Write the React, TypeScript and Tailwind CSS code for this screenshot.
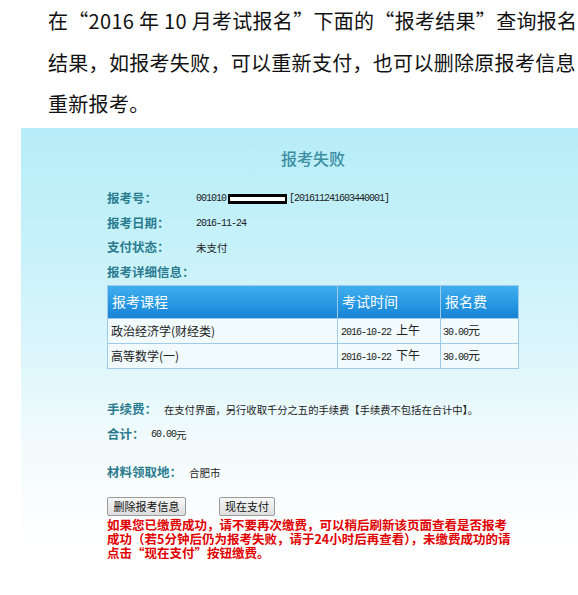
const cjk = { fontFamily: '"Noto Sans CJK SC", "Noto Sans", sans-serif' };
const mono = { fontFamily: '"Liberation Mono", "Noto Sans CJK SC", monospace' };

function InfoRow({ label, children, className = '' }: { label: string; children?: React.ReactNode; className?: string }) {
  return (
    <div className={`flex h-[24.5px] items-center ${className}`}>
      <span className="w-[89px] shrink-0 text-[12.5px] font-bold text-[#2b7c8f]">{label}</span>
      {children}
    </div>
  );
}

const rows = [
  { course: '政治经济学(财经类)', time: '2016-10-22', half: '上午', fee: '30.00' },
  { course: '高等数学(一)', time: '2016-10-22', half: '下午', fee: '30.00' },
];

export default function App() {
  return (
    <div className="relative h-[595px] w-[578px] overflow-hidden bg-white" style={cjk} lang="zh-CN">
      <div className="h-[128px] pl-[48px] text-[20px] leading-[41.5px] tracking-[0.3px] text-[#111]">
        <div className="whitespace-nowrap">在“2016 年 10 月考试报名”下面的“报考结果”查询报名</div>
        <div className="whitespace-nowrap">结果，如报考失败，可以重新支付，也可以删除原报考信息</div>
        <div className="whitespace-nowrap">重新报考。</div>
      </div>

      <section className="ml-[21px] h-[455px] bg-[linear-gradient(to_bottom,#b6edf8_0%,#c6f1fa_25%,#dcf6fb_50%,#f3fbfd_70%,#ffffff_92%)] pl-[86px] pt-[20px]">
        <h2 className="w-[412px] text-center text-[16px] leading-[20px] font-medium text-[#3d8ea3]">报考失败</h2>

        <div className="mt-[18.5px]">
          <InfoRow label="报考号：">
            <span className="flex items-center text-[10px] tracking-[-1px] text-[#222]" style={mono}>
              001010
              <span className="mx-[2px] inline-block h-[10px] w-[59px] border-y-[3px] border-x-[2px] border-black bg-white" />
              [201611241603440001]
            </span>
          </InfoRow>
          <InfoRow label="报考日期：">
            <span className="text-[10px] tracking-[-1px] text-[#222]" style={mono}>2016-11-24</span>
          </InfoRow>
          <InfoRow label="支付状态：">
            <span className="text-[10.5px] text-[#222]">未支付</span>
          </InfoRow>
          <InfoRow label="报考详细信息：" />
        </div>

        <table className="w-[412px] border-collapse text-left">
          <thead>
            <tr className="h-[33px] bg-[linear-gradient(to_bottom,#42b0ef,#2596e2_60%,#1883d3)] text-[14px] text-white">
              <th className="w-[230px] border border-[#9fcbea] pl-[4px] font-normal">报考课程</th>
              <th className="w-[103px] border border-[#9fcbea] pl-[4px] font-normal">考试时间</th>
              <th className="border border-[#9fcbea] pl-[4px] font-normal">报名费</th>
            </tr>
          </thead>
          <tbody>
            {rows.map((r) => (
              <tr key={r.course} className="h-[25px] bg-[#f1fafd] text-[12px] text-[#222]">
                <td className="border border-[#9fcbea] pl-[3px]">{r.course}</td>
                <td className="border border-[#9fcbea] pl-[3px]">
                  <span className="text-[10px] tracking-[-1px]" style={mono}>{r.time}</span>
                  <span className="ml-[5px]">{r.half}</span>
                </td>
                <td className="border border-[#9fcbea] pl-[2px]">
                  <span className="text-[10px] tracking-[-1px]" style={mono}>{r.fee}</span>元
                </td>
              </tr>
            ))}
          </tbody>
        </table>

        <div className="mt-[29px] flex h-[24px] items-center">
          <span className="w-[57px] shrink-0 text-[12.5px] font-bold text-[#2b7c8f]">手续费：</span>
          <span className="text-[10.3px] whitespace-nowrap text-[#222]">在支付界面，另行收取千分之五的手续费【手续费不包括在合计中】。</span>
        </div>
        <div className="mt-[1px] flex h-[24px] items-center">
          <span className="w-[44px] shrink-0 text-[12.5px] font-bold text-[#2b7c8f]">合计：</span>
          <span className="text-[10px] tracking-[-1px] text-[#222]" style={mono}>60.00</span>
          <span className="text-[10.5px] text-[#222]">元</span>
        </div>
        <div className="mt-[14px] flex h-[24px] items-center">
          <span className="w-[82px] shrink-0 text-[12.5px] font-bold text-[#2b7c8f]">材料领取地：</span>
          <span className="text-[10.5px] text-[#222]">合肥市</span>
        </div>

        <div className="mt-[12px] flex gap-[33px]">
          <button className="h-[19px] w-[79px] rounded-[2px] border border-[#9a9a9a] bg-[linear-gradient(to_bottom,#f7f7f7,#dedede)] text-[11px] leading-[17px] text-[#111]">
            删除报考信息
          </button>
          <button className="h-[19px] w-[56px] rounded-[2px] border border-[#9a9a9a] bg-[linear-gradient(to_bottom,#f7f7f7,#dedede)] text-[11px] leading-[17px] text-[#111]">
            现在支付
          </button>
        </div>

        <p className="mt-[2px] text-[12.5px] leading-[14px] font-bold whitespace-nowrap text-[#e10000]">
          如果您已缴费成功，请不要再次缴费，可以稍后刷新该页面查看是否报考
          <br />
          成功（若5分钟后仍为报考失败，请于24小时后再查看），未缴费成功的请
          <br />
          点击“现在支付”按钮缴费。
        </p>
      </section>
    </div>
  );
}
